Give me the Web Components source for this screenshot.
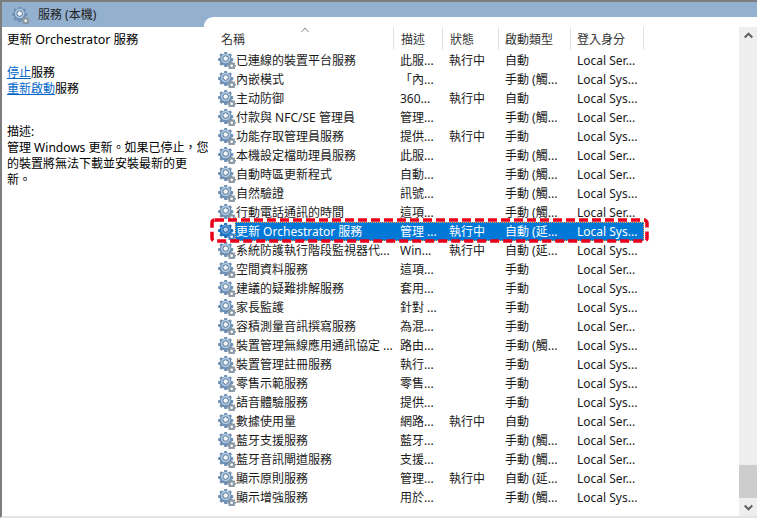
<!DOCTYPE html>
<html lang="zh-Hant">
<head>
<meta charset="utf-8">
<title>服務 (本機)</title>
<style>
html, body { margin: 0; padding: 0; background: #fff; }
body { font: 12px/19px "Noto Sans", "Noto Sans CJK TC", sans-serif; color: #1a1a1a; }
</style>
</head>
<body>
<svc-window>
  <svc-detail slot="detail"></svc-detail>
  <svc-list slot="list"></svc-list>
</svc-window>

<script>
const gear = `<svg width="18" height="18" viewBox="0 0 18 18" aria-hidden="true">
  <g transform="translate(.2 .1) scale(.88)">
    <path fill="var(--gear-edge,#6c8fb3)" d="M7 1h3l.4 2 1.5.6 1.7-1.1 2 2-1.1 1.7.6 1.5 2 .4v3l-2 .4-.6 1.5 1.1 1.7-2 2-1.7-1.1-1.5.6-.4 2H7l-.4-2-1.5-.6-1.7 1.100-2-2 1.100-1.700-.6-1.500-2-.4v-3l2-.4.6-1.500L1.400 4.500l2-2 1.700 1.100 1.500-.6z"/>
    <circle cx="8.500" cy="8.500" r="5.400" fill="var(--gear-mid,#afc9e2)"/>
    <circle cx="8.500" cy="8.500" r="3.100" fill="var(--gear-hole,#f4f7fa)" stroke="var(--gear-line,#48688a)"/>
  </g>
  <path fill="var(--gear-small,#8b98a5)" d="M13 10.500h1.400l.2 1 .8.300.8-.5 1 1-.5.8.300.8 1 .2v1.400l-1 .2-.3.8.5.8-1 1-.8-.5-.8.3-.2.600H13l-.2-.6-.8-.3-.8.5-1-1 .5-.8-.3-.8-1-.2v-1.400l1-.2.3-.8-.5-.8 1-1 .8.500.8-.3z"/>
  <circle cx="13.700" cy="14.700" r="1.300" fill="#fff"/>
</svg>`;

// column widths shared by the header and the rows
const columns = `
  display: grid;
  width: 428px;
  grid-template-columns: 178px 49px 56px 72px 73px;
`;

class SvcWindow extends HTMLElement {
  constructor() {
    super();
    this.attachShadow({ mode: 'open' });
    this.shadowRoot.innerHTML = `
      <style>
        :host { display: block; width: 757px; height: 518px; box-sizing: border-box;
          border-top: 2px solid #7d7d7d; border-left: 2px solid #7d7d7d; border-bottom: 2px solid #e4e4e4;
          background: #fff; overflow: hidden; }
        .title { height: 25px; background: #94b0cf; display: flex; align-items: center; gap: 8px;
          padding-left: 10px; margin-bottom: -10px; color: #222; }
        .title svg { display: block; }
        .body { display: flex; height: 499px; position: relative; }
        /* the description runs a few pixels past the pane edge, as in the real console */
        .left { width: 202px; flex: none; padding-top: 10px; position: relative; z-index: 1; }
        .right { flex: 1; min-width: 0; background: #fff; border-top-left-radius: 9px; }
      </style>
      <div class="title">${gear}<span>服務 (本機)</span></div>
      <div class="body">
        <div class="left"><slot name="detail"></slot></div>
        <div class="right"><slot name="list"></slot></div>
      </div>`;
  }
}

class SvcDetail extends HTMLElement {
  constructor() {
    super();
    this.attachShadow({ mode: 'open' });
    this.shadowRoot.innerHTML = `
      <style>
        :host { display: block; padding: 3px 0 0 5px; line-height: 16px; color: #000; white-space: nowrap; }
        h1 { font: inherit; font-size: 12.5px; margin: 0 0 15px; line-height: 20px; }
        a { color: #0066cc; text-decoration: underline; }
        p { margin: 0; }
        .desc { margin-top: 27px; }
      </style>
      <h1>更新 Orchestrator 服務</h1>
      <p><a href="#">停止</a>服務</p>
      <p><a href="#">重新啟動</a>服務</p>
      <p class="desc">描述:</p>
      <p>管理 Windows 更新。如果已停止，您<br>的裝置將無法下載並安裝最新的更<br>新。</p>`;
  }
}

class SvcRow extends HTMLElement {
  constructor() {
    super();
    this.attachShadow({ mode: 'open' });
  }
  connectedCallback() {
    const [name, desc, state, start, user] = (this.getAttribute('cells') || '').split('|');
    this.shadowRoot.innerHTML = `
      <style>
        :host { display: block; height: 19px; ${columns} white-space: nowrap; color: #1a1a1a; position: relative; }
        :host([selected]) { color: #fff; --gear-edge: #1c6fc0; --gear-mid: #5c9bd8; --gear-hole: #bcd6ef;
          --gear-line: #0f4f92; --gear-small: #3f86cc; }
        span { display: block; overflow: hidden; padding-left: 6px; }
        .name { display: flex; padding-left: 2px; overflow: visible; }
        .name svg { flex: none; }
        .name b { font-weight: normal; margin-left: -1px; padding-left: 1px; flex: 1; }
        :host([selected]) .name b, :host([selected]) span:not(.name) { background: #0078d7; }
        .focus { display: none; }
        :host([selected]) .focus { display: block; position: absolute; left: 19px; right: 0; top: 0; bottom: 0;
          border: 1px dotted #f0a040; pointer-events: none; }
      </style>
      <span class="name">${gear}<b>${name}</b></span>
      <span>${desc}</span><span>${state}</span><span>${start}</span><span>${user}</span>
      <div class="focus"></div>`;
  }
}

class SvcList extends HTMLElement {
  constructor() {
    super();
    this.attachShadow({ mode: 'open' });
    const rows = [
      '已連線的裝置平台服務|此服...|執行中|自動|Local Ser...',
      '內嵌模式|「內...||手動 (觸...|Local Sys...',
      '主动防御|360...|執行中|自動|Local Sys...',
      '付款與 NFC/SE 管理員|管理...||手動 (觸...|Local Ser...',
      '功能存取管理員服務|提供...|執行中|手動|Local Sys...',
      '本機設定檔助理員服務|此服...||手動 (觸...|Local Ser...',
      '自動時區更新程式|自動...||手動 (觸...|Local Ser...',
      '自然驗證|訊號...||手動 (觸...|Local Sys...',
      '行動電話通訊的時間|這項...||手動 (觸...|Local Ser...',
      '更新 Orchestrator 服務|管理 ...|執行中|自動 (延...|Local Sys...',
      '系統防護執行階段監視器代...|Win...|執行中|自動 (延...|Local Sys...',
      '空間資料服務|這項...||手動|Local Ser...',
      '建議的疑難排解服務|套用...||手動|Local Sys...',
      '家長監護|針對 ...||手動|Local Sys...',
      '容積測量音訊撰寫服務|為混...||手動|Local Ser...',
      '裝置管理無線應用通訊協定 ...|路由...||手動 (觸...|Local Sys...',
      '裝置管理註冊服務|執行...||手動|Local Sys...',
      '零售示範服務|零售...||手動|Local Sys...',
      '語音體驗服務|提供...||手動|Local Sys...',
      '數據使用量|網路...|執行中|自動|Local Ser...',
      '藍牙支援服務|藍牙...||手動 (觸...|Local Ser...',
      '藍牙音訊閘道服務|支援...||手動 (觸...|Local Ser...',
      '顯示原則服務|管理...|執行中|自動 (延...|Local Ser...',
      '顯示增強服務|用於...||手動 (觸...|Local Sys...'
    ];
    this.shadowRoot.innerHTML = `
      <style>
        :host { display: flex; height: 499px; position: relative; }
        .table { width: 535px; flex: none; padding-left: 12px; padding-top: 10px; box-sizing: border-box; }
        .head { ${columns} height: 24px; color: #333; position: relative; line-height: 26px; }
        .head div { padding-left: 7px; position: relative; }
        .head div:nth-child(n+4) { padding-left: 6px; }
        .head div::after { content: ""; position: absolute; right: 0; top: 0; width: 1px; height: 23px; background: #e2e2e2; }
        .head .first { padding-left: 5px; }
        .sort { position: absolute; left: 85px; top: 0; }
        .rows { position: relative; }
        .mark { position: absolute; left: -6px; top: 167px; pointer-events: none; display: block; }
        .bar { width: 18px; flex: none; margin-top: 10px; background: #eee; position: relative;
          display: flex; flex-direction: column; justify-content: space-between; }
        .arrow { height: 17px; display: flex; align-items: center; justify-content: center; }
        .thumb { position: absolute; left: 0; right: 0; top: 438px; height: 33px; background: #cdcdcd; }
      </style>
      <div class="table">
        <div class="head">
          <div class="first">名稱<svg class="sort" width="8" height="6" viewBox="0 0 8 6"><path d="M.5 5l3.500-4 3.500 4" fill="none" stroke="#888"/></svg></div>
          <div>描述</div><div>狀態</div><div>啟動類型</div><div>登入身分</div>
        </div>
        <div class="rows">
          ${rows.map((r, i) => `<svc-row cells="${r}"${i === 9 ? ' selected' : ''}></svc-row>`).join('')}
          <svg class="mark" width="439" height="25" viewBox="0 0 439 25">
            <rect x="2" y="2" width="435" height="21" rx="3" fill="none" stroke="#e8001c" stroke-width="3.500" stroke-dasharray="9 4"/>
          </svg>
        </div>
      </div>
      <div class="bar">
        <div class="arrow"><svg width="9" height="7" viewBox="0 0 9 7"><path d="M.7 5.500l3.800-3.800 3.800 3.800" fill="none" stroke="#606060" stroke-width="2"/></svg></div>
        <div class="thumb"></div>
        <div class="arrow"><svg width="9" height="7" viewBox="0 0 9 7"><path d="M.7 1.500l3.800 3.800 3.800-3.800" fill="none" stroke="#606060" stroke-width="2"/></svg></div>
      </div>`;
  }
}

customElements.define('svc-row', SvcRow);
customElements.define('svc-detail', SvcDetail);
customElements.define('svc-list', SvcList);
customElements.define('svc-window', SvcWindow);
</script>
</body>
</html>
